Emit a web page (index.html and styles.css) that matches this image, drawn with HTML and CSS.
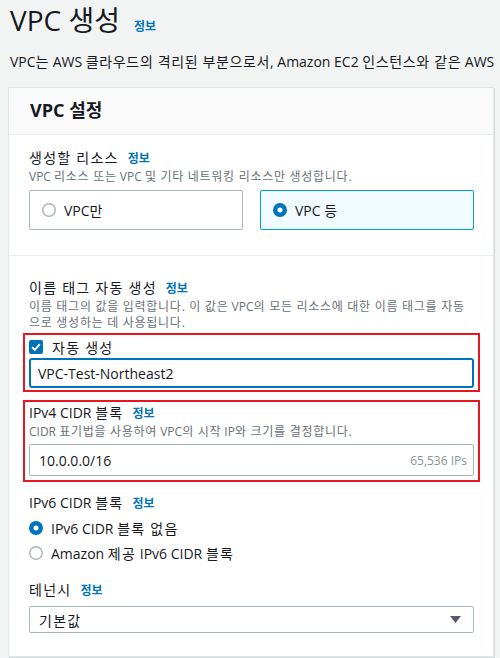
FILE: index.html
```html
<!DOCTYPE html>
<html lang="ko">
<head>
<meta charset="utf-8">
<title>VPC 생성</title>
<link rel="stylesheet" href="styles.css">
</head>
<body>
<div class="page">
  <h1 class="title">VPC 생성<span class="info info-title">정보</span></h1>
  <p class="intro">VPC<span class="ko">는</span> AWS <span class="ko">클라우드의 격리된 부분으로서</span>, Amazon EC2 <span class="ko">인스턴스와 같은</span> AWS</p>

  <div class="card">
    <div class="card-header">VPC 설정</div>

    <div class="section section-first">
      <div class="label"><span class="ko">생성할 리소스</span><span class="info">정보</span></div>
      <div class="desc">VPC <span class="ko">리소스 또는</span> VPC <span class="ko">및 기타 네트워킹 리소스만 생성합니다</span>.</div>
      <div class="tiles">
        <div class="tile">
          <svg class="radio" width="14" height="14" viewBox="0 0 14 14"><circle cx="7" cy="7" r="6.25" fill="#fff" stroke="#aab7b8" stroke-width="1.5"/></svg>
          <span>VPC만</span>
        </div>
        <div class="tile tile-on">
          <svg class="radio" width="14" height="14" viewBox="0 0 14 14"><circle cx="7" cy="7" r="4.75" fill="#fff" stroke="#0073bb" stroke-width="4.5"/></svg>
          <span>VPC 등</span>
        </div>
      </div>
    </div>

    <div class="section section-second">
      <div class="label"><span class="ko">이름 태그 자동 생성</span><span class="info">정보</span></div>
      <div class="desc"><span class="line"><span class="ko">이름 태그의 값을 입력합니다. 이 값은</span> VPC<span class="ko">의 모든 리소스에 대한 이름 태그를 자동</span></span><span class="line"><span class="ko">으로 생성하는 데 사용됩니다</span>.</span></div>

      <div class="mark mark-name">
        <div class="check-row">
          <svg class="checkbox" width="14" height="14" viewBox="0 0 14 14"><rect x="0" y="0" width="14" height="14" rx="2" fill="#0073bb"/><path d="M3.2 7.2 L5.9 9.9 L10.8 4.2" fill="none" stroke="#fff" stroke-width="2"/></svg>
          <span class="ko">자동 생성</span>
        </div>
        <div class="input input-focus">VPC-Test-Northeast2</div>
      </div>

      <div class="mark mark-cidr">
        <div class="label">IPv4 CIDR <span class="ko">블록</span><span class="info">정보</span></div>
        <div class="desc">CIDR <span class="ko">표기법을 사용하여</span> VPC<span class="ko">의 시작</span> IP<span class="ko">와 크기를 결정합니다</span>.</div>
        <div class="input input-cidr"><span>10.0.0.0/16</span><span class="hint">65,536 IPs</span></div>
      </div>

      <div class="label label-ipv6">IPv6 CIDR <span class="ko">블록</span><span class="info">정보</span></div>
      <div class="radio-row radio-row-first">
        <svg class="radio" width="14" height="14" viewBox="0 0 14 14"><circle cx="7" cy="7" r="4.75" fill="#fff" stroke="#0073bb" stroke-width="4.5"/></svg>
        <span>IPv6 CIDR <span class="ko">블록 없음</span></span>
      </div>
      <div class="radio-row">
        <svg class="radio" width="14" height="14" viewBox="0 0 14 14"><circle cx="7" cy="7" r="6.25" fill="#fff" stroke="#aab7b8" stroke-width="1.5"/></svg>
        <span>Amazon <span class="ko">제공</span> IPv6 CIDR <span class="ko">블록</span></span>
      </div>

      <div class="label label-tenancy"><span class="ko">테넌시</span><span class="info">정보</span></div>
      <div class="select">
        <span class="ko">기본값</span>
        <svg class="caret" width="11" height="7" viewBox="0 0 11 7"><polygon points="0,0 11,0 5.5,7" fill="#545b64"/></svg>
      </div>
    </div>
  </div>
</div>
</body>
</html>
```

FILE: styles.css
```css
html, body {
  margin: 0;
  padding: 0;
}

body {
  background: #f2f3f3;
  color: #16191f;
  font-family: "Open Sans", "Noto Sans CJK KR", sans-serif;
  width: 500px;
  height: 658px;
  overflow: hidden;
}

.page {
  padding: 0 6px 0 8px;
}

.ko {
  letter-spacing: 0.09em;
}

.title {
  margin: 0 0 0 2px;
  font-size: 28px;
  font-weight: 400;
  line-height: 40px;
  height: 40px;
}

.info {
  color: #0073bb;
  font-size: 12px;
  font-weight: 700;
  margin-left: 9px;
}

.info-title {
  margin-left: 14px;
}

.intro {
  margin: 12px 0 0 2px;
  font-size: 14px;
  line-height: 20px;
  white-space: nowrap;
}

.intro .ko {
  letter-spacing: 0.045em;
}

.card {
  margin-top: 15px;
  background: #fff;
  border: 1px solid #e3e6e6;
  box-shadow: 1px 1px 0 #d5dbdb;
}

.card-header {
  background: #fafafa;
  border-bottom: 1px solid #eaeded;
  height: 46px;
  line-height: 44px;
  padding-left: 21px;
  font-size: 18px;
  font-weight: 700;
}

.section {
  padding-left: 20px;
  padding-right: 19px;
}

.section-first {
  padding-top: 12px;
  padding-bottom: 25px;
  border-bottom: 1px solid #eaeded;
}

.section-second {
  padding-top: 21px;
  padding-bottom: 23px;
}

.label {
  font-size: 14px;
  line-height: 22px;
  height: 22px;
}

.desc {
  font-size: 12px;
  line-height: 16px;
  color: #687078;
}

.desc .ko {
  letter-spacing: 0.06em;
}

.desc .line {
  display: block;
  white-space: nowrap;
}

.tiles {
  margin-top: 5px;
  display: grid;
  grid-template-columns: 1fr 1fr;
  column-gap: 17px;
}

.tile {
  height: 40px;
  box-sizing: border-box;
  border: 1px solid #aab7b8;
  border-radius: 2px;
  display: flex;
  align-items: center;
  gap: 8px;
  padding-left: 12px;
  font-size: 14px;
}

.tile-on {
  background: #f1faff;
  border-color: #00a1c9;
}

.radio, .checkbox {
  flex: none;
  display: block;
}

.mark {
  border: 2px solid #e8161f;
  margin-left: -6px;
  margin-right: -6px;
  padding-left: 4px;
  padding-right: 4px;
}

.mark-name {
  margin-top: 2px;
  padding-top: 1px;
  padding-bottom: 2px;
}

.mark-cidr {
  margin-top: 8px;
  padding-bottom: 4px;
}

.check-row {
  height: 22px;
  display: flex;
  align-items: center;
  gap: 9px;
  font-size: 14px;
}

.input {
  box-sizing: border-box;
  display: flex;
  align-items: center;
  justify-content: space-between;
  font-size: 14px;
  border-radius: 3px;
  background: #fff;
}

.input-focus {
  height: 30px;
  border: 2px solid #0073bb;
  padding: 0 7px;
}

.input-cidr {
  height: 32px;
  margin-top: 4px;
  border: 1px solid #aab7b8;
  border-radius: 2px;
  padding: 0 6px 0 9px;
}

.hint {
  font-size: 12px;
  color: #879596;
}

.label-ipv6 {
  margin-top: 10px;
}

.radio-row {
  height: 25px;
  display: flex;
  align-items: center;
  gap: 8px;
  font-size: 14px;
}

.radio-row-first {
  margin-top: 1px;
}

.label-tenancy {
  margin-top: 14px;
}

.select {
  margin-top: 5px;
  height: 27px;
  box-sizing: border-box;
  border: 1px solid #aab7b8;
  border-radius: 2px;
  display: flex;
  align-items: center;
  justify-content: space-between;
  padding: 0 12px 0 9px;
  font-size: 14px;
}

.caret {
  display: block;
}
```
